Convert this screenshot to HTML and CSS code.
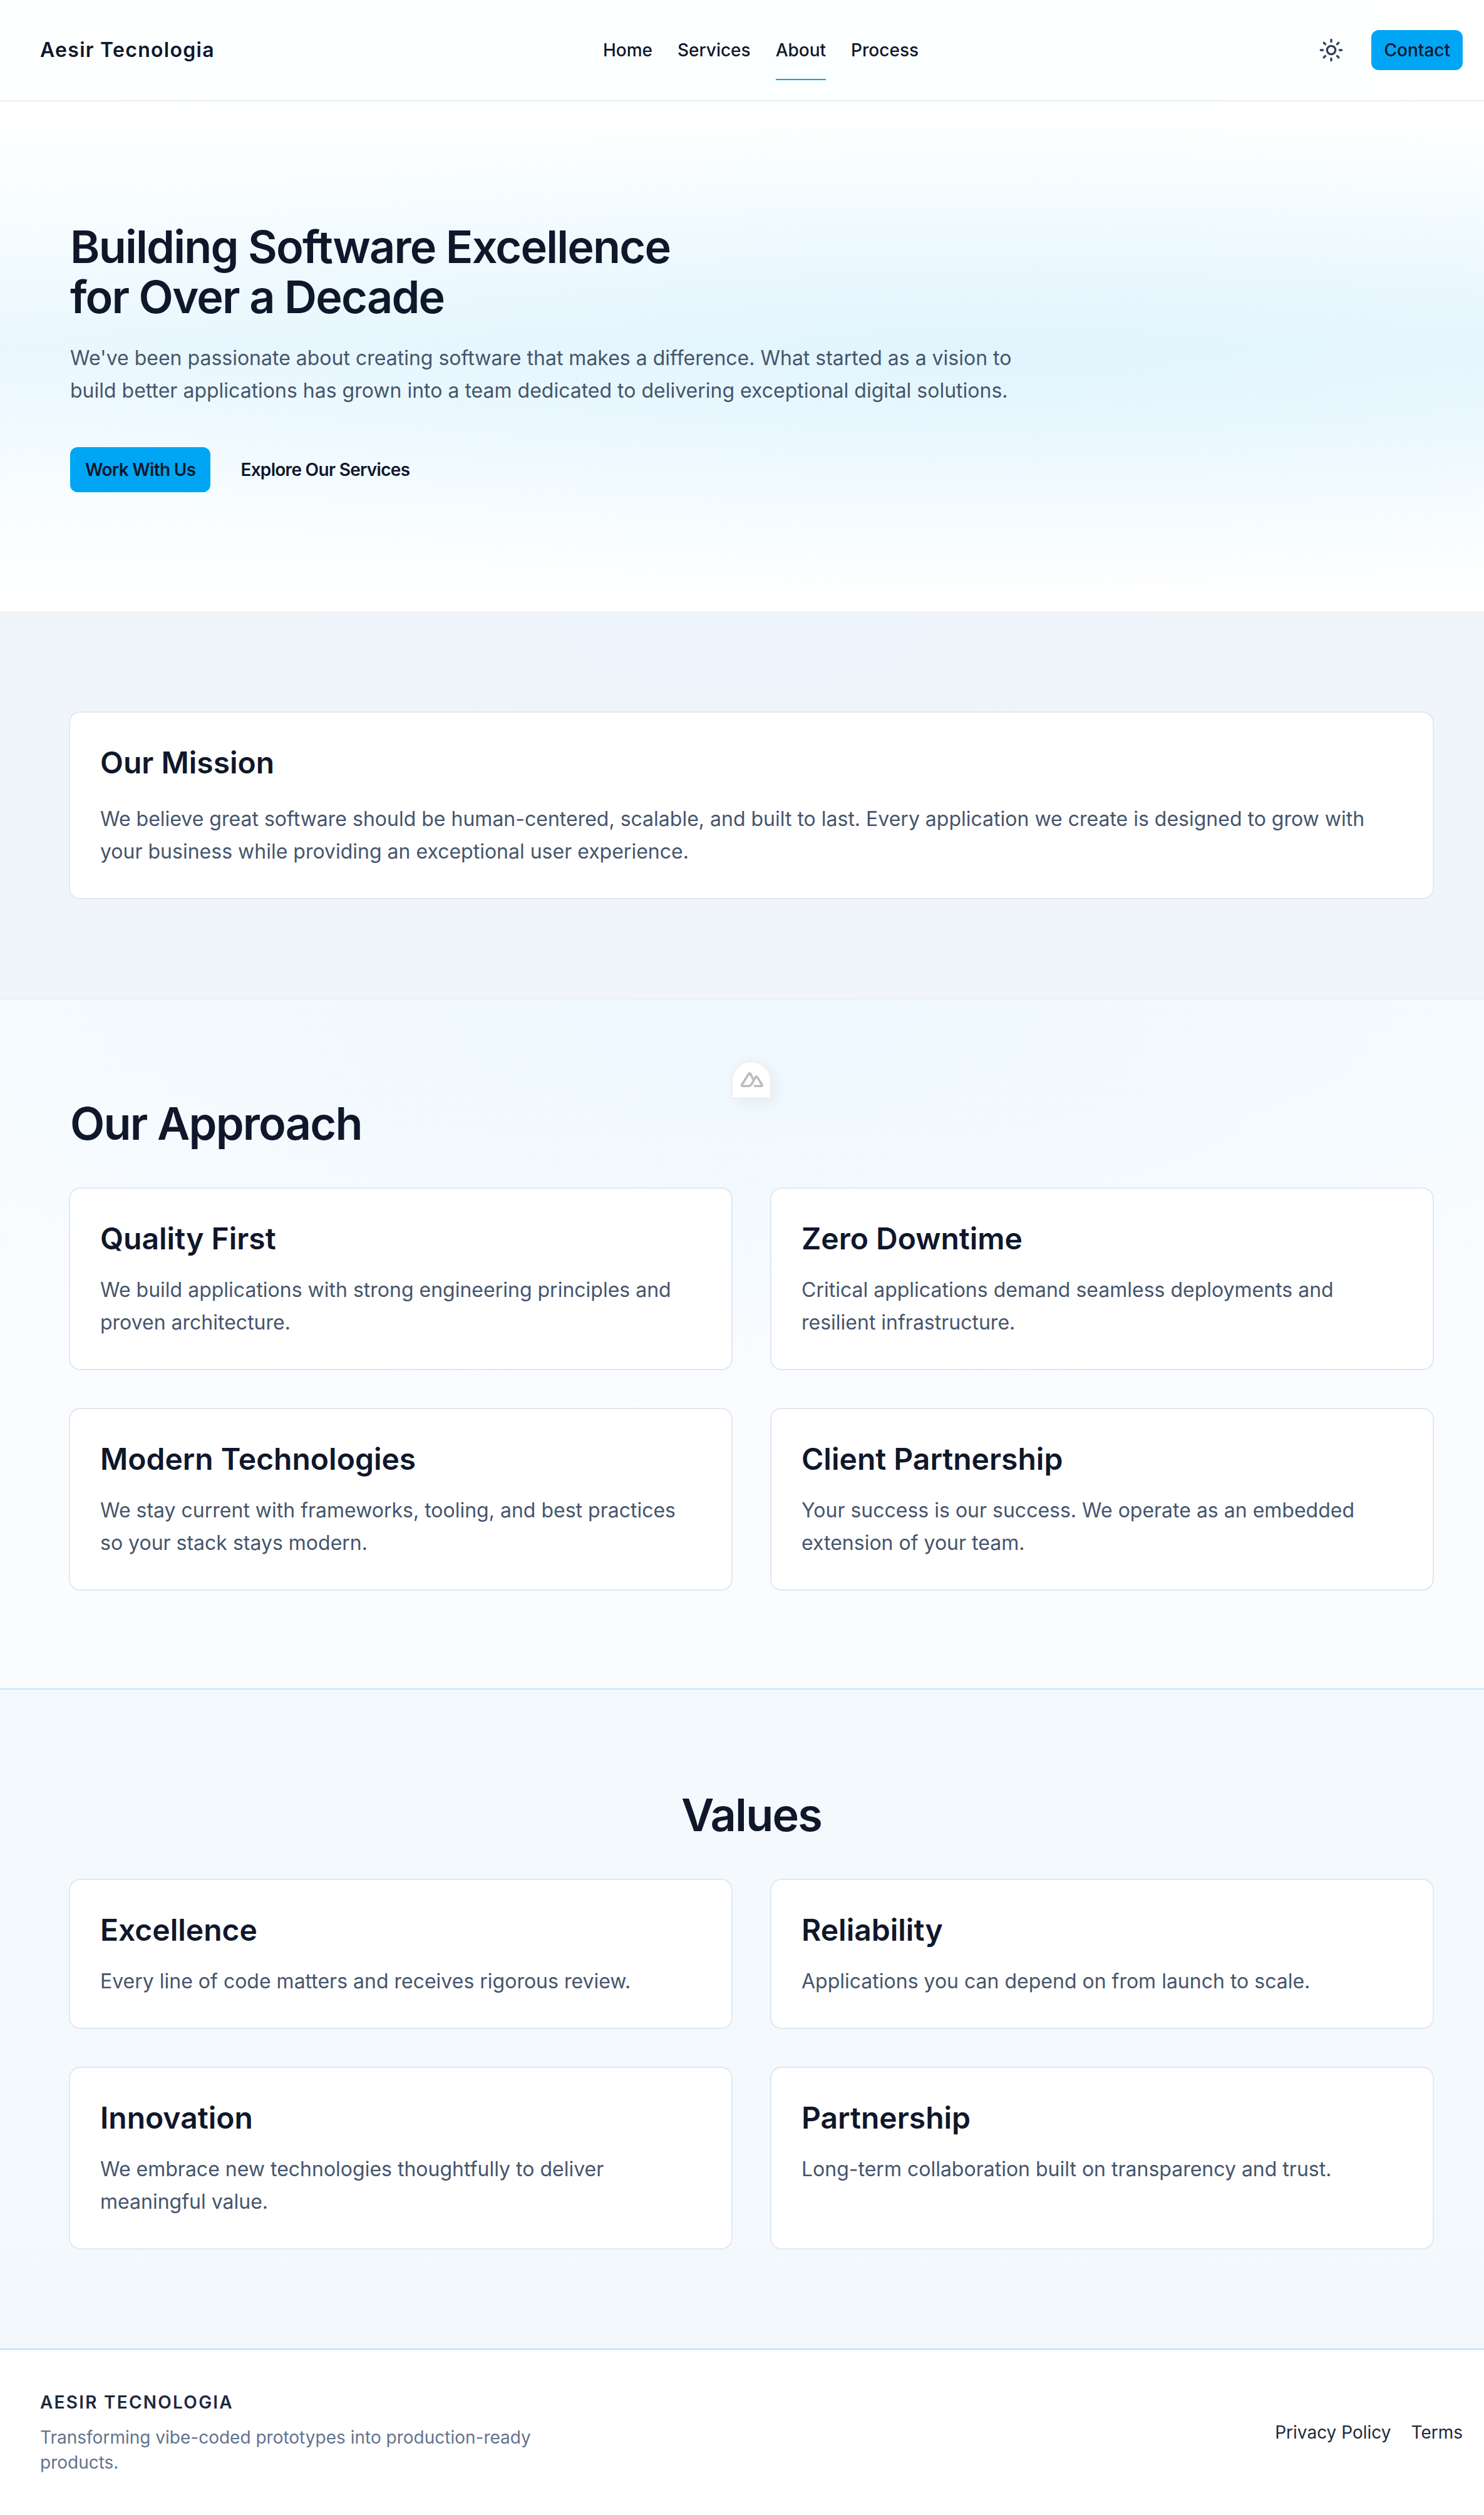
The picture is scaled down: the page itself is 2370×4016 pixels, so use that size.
FILE: index.html
```html
<!DOCTYPE html>
<html lang="en">
<head>
<meta charset="utf-8">
<title>Aesir Tecnologia - About</title>
<link rel="stylesheet" href="styles.css">
</head>
<body>
<header class="header">
  <a class="brand">Aesir Tecnologia</a>
  <nav class="nav">
    <a>Home</a><a>Services</a><a class="active">About</a><a>Process</a>
  </nav>
  <div class="actions">
    <svg class="sun" viewBox="0 0 24 24" fill="none" stroke="currentColor" stroke-width="2" stroke-linecap="round"><circle cx="12" cy="12" r="4"/><path d="M12 2v2M12 20v2M4.93 4.93l1.41 1.41M17.66 17.66l1.41 1.41M2 12h2M20 12h2M6.34 17.66l-1.41 1.41M19.07 4.93l-1.41 1.41"/></svg>
    <a class="btn btn-contact">Contact</a>
  </div>
</header>
<main>
  <section class="hero">
    <h1>Building Software Excellence<br>for Over a Decade</h1>
    <p class="lead">We've been passionate about creating software that makes a difference. What started as a vision to build better applications has grown into a team dedicated to delivering exceptional digital solutions.</p>
    <div class="cta"><a class="btn">Work With Us</a><a class="btn btn-ghost">Explore Our Services</a></div>
  </section>
  <section class="mission">
    <article class="card">
      <h3>Our Mission</h3>
      <p>We believe great software should be human-centered, scalable, and built to last. Every application we create is designed to grow with your business while providing an exceptional user experience.</p>
    </article>
  </section>
  <section class="approach">
    <h2>Our Approach</h2>
    <div class="grid">
      <article class="card"><h3>Quality First</h3><p>We build applications with strong engineering principles and proven architecture.</p></article>
      <article class="card"><h3>Zero Downtime</h3><p>Critical applications demand seamless deployments and resilient infrastructure.</p></article>
      <article class="card"><h3>Modern Technologies</h3><p>We stay current with frameworks, tooling, and best practices so your stack stays modern.</p></article>
      <article class="card"><h3>Client Partnership</h3><p>Your success is our success. We operate as an embedded extension of your team.</p></article>
    </div>
  </section>
  <section class="values">
    <h2>Values</h2>
    <div class="grid">
      <article class="card"><h3>Excellence</h3><p>Every line of code matters and receives rigorous review.</p></article>
      <article class="card"><h3>Reliability</h3><p>Applications you can depend on from launch to scale.</p></article>
      <article class="card"><h3>Innovation</h3><p>We embrace new technologies thoughtfully to deliver meaningful value.</p></article>
      <article class="card"><h3>Partnership</h3><p>Long-term collaboration built on transparency and trust.</p></article>
    </div>
  </section>
</main>
<footer class="footer">
  <div>
    <p class="footer-brand">Aesir Tecnologia</p>
    <p class="footer-text">Transforming vibe-coded prototypes into production-ready products.</p>
  </div>
  <nav class="footer-links"><a>Privacy Policy</a><a>Terms</a></nav>
</footer>
<div class="devtools">
  <svg viewBox="0 0 36 24" fill="none" stroke="#bcbcbc" stroke-width="3.6" stroke-linejoin="round"><path d="M20.2 12L15.4 2.9Q14 0.9 12.6 2.9L2.1 19.8Q1 22.2 3.4 22.2H12.5Q15.6 22.2 17.3 19.4L23.6 8Q25 6 26.3 8L33.9 20Q34.8 22.2 32.6 22.2H21"/></svg>
</div>
</body>
</html>
```
FILE: styles.css
```css
* { box-sizing: border-box; margin: 0; padding: 0; }
body {
  position: relative;
  width: 2370px;
  height: 4016px;
  font-family: Inter, "Liberation Sans", sans-serif;
  font-size: 32px;
  line-height: 52px;
  color: #0f172b;
  background: #fff;
}
.header {
  display: grid;
  grid-template-columns: 1fr auto 1fr;
  align-items: center;
  height: 162px;
  padding: 0 34px 0 64px;
  border-bottom: 2px solid #e9eef4;
  background: linear-gradient(90deg, #fdfffe, #fcffff 20%, #fcffff 75%, #fefffe);
}
.brand { font-size: 32px; font-weight: 600; letter-spacing: 1.28px; }
.nav { display: flex; gap: 40px; margin-left: 30px; font-size: 28px; font-weight: 500; line-height: 40px; }
.nav a { padding: 28px 0 26px; border-bottom: 2px solid transparent; }
.nav .active { border-color: #00a6f4; }
.actions { display: flex; align-items: center; justify-content: flex-end; gap: 44px; }
.sun { width: 40px; height: 40px; color: #314158; }
.btn {
  display: inline-flex;
  align-items: center;
  height: 72px;
  padding: 0 24px;
  border-radius: 12px;
  background: #00a6f4;
  font-size: 28px;
  font-weight: 600;
  letter-spacing: -0.7px;
}
.btn-contact { height: 64px; padding: 0 20px; font-weight: 500; letter-spacing: 0; }
.btn-ghost { background: none; }
.hero {
  height: 814px;
  padding: 192px 82px 0 112px;
  background:
    radial-gradient(ellipse 75% 46% at 68% 50%, rgba(205, 238, 252, 0.36), rgba(205, 238, 252, 0.18) 45%, transparent),
    linear-gradient(#fff, #f8fdff 20%, #ebf8fe 48%, #f0faff 62%, #f9fdff 80%, #fff);
}
h1, h2 { font-size: 72px; line-height: 80px; font-weight: 600; letter-spacing: -1.8px; }
.lead { width: 1536px; margin-top: 32px; color: #45556c; }
.cta { display: flex; gap: 24px; margin-top: 64px; }
.mission {
  padding: 160px 82px;
  border-top: 2px solid #eff4f9;
  border-bottom: 2px solid #e9eff4;
  background: radial-gradient(ellipse 40% 60% at 50% 0, #eef4fc, #f0f5f9);
}
.card {
  padding: 48px;
  border-radius: 16px;
  background: #fff;
  box-shadow: 0 0 0 2px #e2e8f0;
}
.card h3 { font-size: 48px; line-height: 64px; font-weight: 600; margin-bottom: 24px; }
.mission .card h3 { margin-bottom: 32px; }
.card p { color: #45556c; }
.mission, .approach, .values { padding-left: 112px; }
.approach {
  padding-top: 158px;
  padding-right: 82px;
  height: 1100px;
  background:
    radial-gradient(ellipse 60% 60% at 50% 0, #eef8fe, rgba(242, 250, 254, 0)),
    linear-gradient(#f6fbfe, #fafcff 50%, #fbfcfe);
}
.grid { display: grid; grid-template-columns: 1fr 1fr; gap: 64px; margin-top: 64px; }
.values { padding-top: 160px; padding-right: 82px; height: 1054px; border-top: 2px solid #bfe9fd; background: linear-gradient(#f4f9fe 80%, #f2f7fc); }
.values h2 { text-align: center; }
.footer {
  display: flex;
  align-items: center;
  justify-content: space-between;
  height: 266px;
  padding: 0 34px 0 64px;
  border-top: 2px solid #b8e3fa;
  background: #fff;
  font-size: 28px;
  line-height: 40px;
}
.footer-brand { font-weight: 600; letter-spacing: 2.24px; text-transform: uppercase; color: #1d293d; margin-bottom: 16px; }
.footer-text { width: 800px; color: #62748e; }
.footer-links { display: flex; gap: 32px; color: #1d293d; }
.devtools {
  position: absolute;
  left: 1168px;
  top: 1694px;
  width: 64px;
  height: 60px;
  padding: 16px 13px;
  border: 2px solid #efefef;
  border-radius: 32px 32px 0 0;
  background: #fff;
  box-shadow: 6px 6px 24px rgba(0, 0, 0, 0.06);
}
.devtools svg { display: block; width: 36px; height: 24px; }
```
